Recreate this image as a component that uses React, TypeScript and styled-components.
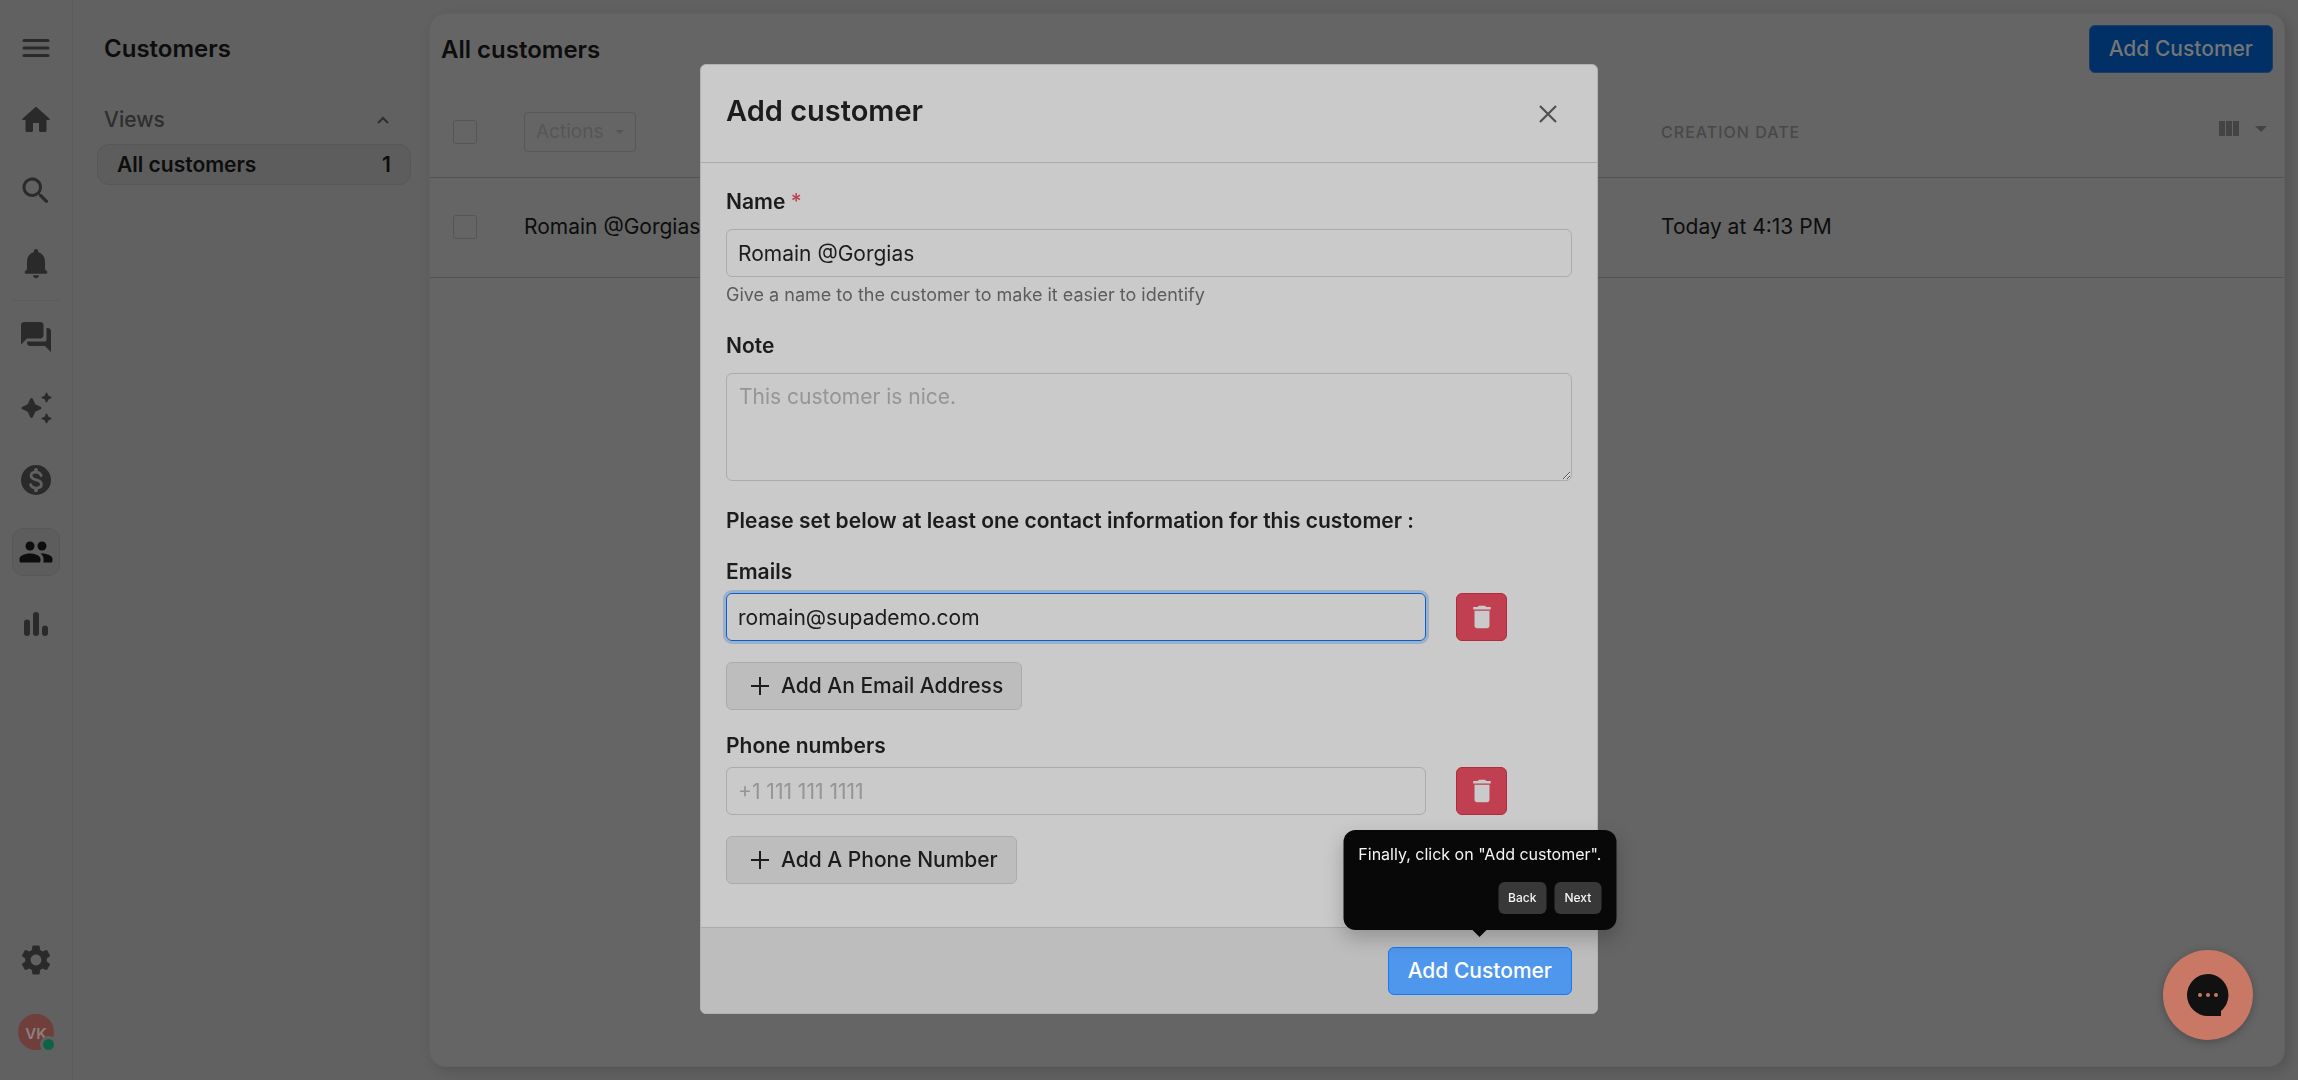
import React from "react";
import styled, { createGlobalStyle, css } from "styled-components";
import { MdDelete, MdSettings } from "react-icons/md";

const color = {
  frame: "#616161",
  card: "#656565",
  active: "#5d5d5d",
  activeBorder: "#575757",
  line: "#535353",
  faint: "#5c5c5c",
  ink: "#0d0d0d",
  inkSoft: "#2a2a2a",
  modal: "#cacaca",
  modalAlt: "#bdbdbd",
  modalLine: "#ababab",
  modalInk: "#1c1c1c",
  danger: "#c03f50",
  accent: "#0a5ecb",
  coral: "#c97865",
};

const GlobalStyle = createGlobalStyle`
  *, *::before, *::after { box-sizing: border-box; }
  body {
    margin: 0;
    background: ${color.frame};
    color: ${color.ink};
    font-family: Inter, "Liberation Sans", sans-serif;
    font-size: 21px;
    line-height: 30px;
    -webkit-font-smoothing: antialiased;
  }
  button, input, textarea { font: inherit; color: inherit; margin: 0; }
  button { cursor: pointer; }
  h1, h2, p { margin: 0; }
`;

const Shell = styled.div`
  display: grid;
  grid-template-columns: 73px 356px minmax(0, 1fr);
  min-height: 100vh;
`;

const Rail = styled.nav`
  display: flex;
  flex-direction: column;
  justify-content: space-between;
  align-items: center;
  padding: 24px 0;
  border-right: 1px solid ${color.faint};
`;

const RailGroup = styled.div`
  display: flex;
  flex-direction: column;
  gap: 24px;
`;

const RailDivider = styled.hr`
  width: 48px;
  margin: 12px 0 11px;
  border: 0;
  border-top: 1px solid ${color.faint};
`;

const RailButton = styled.button<{ $active?: boolean }>`
  display: flex;
  align-items: center;
  justify-content: center;
  width: 48px;
  height: 48px;
  padding: 0;
  border: 1px solid ${(p) => (p.$active ? color.activeBorder : "transparent")};
  border-radius: 12px;
  background: ${(p) => (p.$active ? color.active : "transparent")};
  color: ${(p) => (p.$active ? color.ink : color.inkSoft)};

  svg {
    width: 36px;
    height: 36px;
    flex: none;
    fill: currentColor;
  }
`;

const Avatar = styled.span`
  position: relative;
  display: flex;
  align-items: center;
  justify-content: center;
  width: 36px;
  height: 36px;
  padding-top: 4px;
  border-radius: 50%;
  background: #713f3b;
  color: #8c8080;
  font-size: 15px;
  font-weight: 600;
  line-height: 20px;
`;

const Presence = styled.span`
  position: absolute;
  right: -3px;
  bottom: -3px;
  width: 17px;
  height: 17px;
  border: 3px solid ${color.frame};
  border-radius: 50%;
  background: #0f6344;
`;

const Sidebar = styled.aside`
  padding: 34px 18px 24px 24px;
`;

const SidebarTitle = styled.h1`
  padding-left: 7px;
  font-size: 24px;
  font-weight: 600;
  line-height: 30px;
`;

const SectionToggle = styled.button`
  display: flex;
  align-items: center;
  justify-content: space-between;
  width: 100%;
  height: 30px;
  margin: 41px 0 9px;
  padding: 0 21px 0 7px;
  border: 0;
  background: none;
  color: #2e2e2e;
  font-weight: 500;
`;

const ViewLink = styled.a`
  display: flex;
  align-items: center;
  justify-content: space-between;
  height: 41px;
  padding: 0 19px;
  border: 1px solid ${color.activeBorder};
  border-radius: 12px;
  background: ${color.active};
  color: ${color.ink};
  font-weight: 600;
  text-decoration: none;
`;

const Card = styled.main`
  margin: 13px 13px 13px 0;
  border: 1px solid #616161;
  border-radius: 16px;
  background: ${color.card};
  box-shadow: 4px 4px 12px rgba(0, 0, 0, 0.14);
`;

const CardHeader = styled.header`
  display: flex;
  align-items: center;
  justify-content: space-between;
  padding: 11px 11px 14px;
`;

const CardTitle = styled.h2`
  padding-top: 1px;
  font-size: 24px;
  font-weight: 600;
  line-height: 30px;
`;

const PrimaryButton = styled.button<{ $highlighted?: boolean }>`
  height: 48px;
  padding: 0 19px;
  border: 1px solid ${(p) => (p.$highlighted ? "#1479f7" : "#1b3d66")};
  border-radius: 6px;
  background: ${(p) => (p.$highlighted ? "#4f97ec" : "#003066")};
  color: ${(p) => (p.$highlighted ? "#ffffff" : "#757575")};
  font-weight: 500;
`;

const Table = styled.table`
  width: 100%;
  table-layout: fixed;
  border-collapse: collapse;
`;

const cell = css`
  padding: 0;
  border-bottom: 1px solid ${color.line};
  font-weight: 400;
  text-align: left;
`;

const HeadCell = styled.th<{ $width?: string }>`
  ${cell}
  width: ${(p) => p.$width ?? "auto"};
  height: 90px;
`;

const Cell = styled.td`
  ${cell}
  height: 100px;
`;

const CheckBox = styled.input`
  display: block;
  appearance: none;
  width: 24px;
  height: 24px;
  margin: 0 0 0 23px;
  border: 1px solid #555555;
  border-radius: 3px;
`;

const ActionsButton = styled.button`
  display: flex;
  align-items: center;
  gap: 12px;
  height: 40px;
  padding: 0 11px;
  border: 1px solid #575757;
  border-radius: 4px;
  background: none;
  color: #565656;
  font-size: 19px;

  &:disabled {
    color: #565656;
    cursor: default;
  }
`;

const HeadRow = styled.div`
  display: flex;
  align-items: center;
  justify-content: space-between;
  padding-right: 17px;
`;

const HeadLabel = styled.span`
  color: #484848;
  font-size: 16px;
  font-weight: 500;
  letter-spacing: 1px;
`;

const ColumnsButton = styled.button`
  display: flex;
  align-items: center;
  gap: 16px;
  padding: 0 0 6px;
  border: 0;
  background: none;
  color: #444444;
`;

const ChatLauncher = styled.button`
  position: fixed;
  right: 45px;
  bottom: 40px;
  display: flex;
  align-items: center;
  justify-content: center;
  width: 90px;
  height: 90px;
  padding: 0;
  border: 0;
  border-radius: 50%;
  background: ${color.coral};
  box-shadow: 0 2px 8px rgba(0, 0, 0, 0.25);
`;

const Overlay = styled.div`
  position: absolute;
  inset: 0;
  padding: 64px 24px;
  pointer-events: none;
`;

const Modal = styled.section`
  max-width: 898px;
  margin: 0 auto;
  border: 1px solid #b2b2b2;
  border-radius: 6px;
  background: ${color.modal};
  color: ${color.modalInk};
  pointer-events: auto;
`;

const ModalHeader = styled.header`
  display: flex;
  align-items: flex-start;
  justify-content: space-between;
  padding: 25px 25px 30px;
  border-bottom: 1px solid ${color.modalLine};
`;

const ModalTitle = styled.h2`
  font-size: 29px;
  font-weight: 600;
  line-height: 42px;
`;

const CloseButton = styled.button`
  display: flex;
  padding: 15px 15px 0 0;
  border: 0;
  background: none;
  color: #505050;
`;

const ModalBody = styled.div`
  padding: 24px 25px 43px;
`;

const Field = styled.div`
  margin-bottom: 22px;
`;

const FieldLabel = styled.label<{ $compact?: boolean }>`
  display: block;
  margin-bottom: ${(p) => (p.$compact ? 6 : 12)}px;
  font-weight: 600;
`;

const Required = styled.span`
  color: ${color.danger};
  font-weight: 500;
`;

const control = css`
  display: block;
  width: 100%;
  border: 1px solid ${color.modalLine};
  border-radius: 6px;
  outline: none;
  background: transparent;

  &::placeholder {
    color: #959595;
    opacity: 1;
  }
`;

const TextInput = styled.input<{ $focused?: boolean }>`
  ${control}
  height: 48px;
  padding: 0 11px;
  ${(p) =>
    p.$focused &&
    css`
      border-color: ${color.accent};
      box-shadow: 0 0 0 3px rgba(15, 98, 203, 0.25);
    `}
`;

const TextArea = styled.textarea`
  ${control}
  height: 108px;
  padding: 8px 12px;
  resize: vertical;
`;

const Help = styled.p`
  margin-top: 4px;
  color: #5c5c5c;
  font-size: 18px;
  line-height: 28px;
`;

const Lead = styled.p`
  margin-top: 25px;
  font-weight: 600;
`;

const ContactSection = styled.div`
  margin-top: 21px;
`;

const ContactRow = styled.div`
  display: grid;
  grid-template-columns: 1fr 51px;
  gap: 30px;
  margin-bottom: 21px;
  padding-right: 65px;
`;

const DeleteButton = styled.button`
  display: flex;
  align-items: center;
  justify-content: center;
  height: 48px;
  padding: 0;
  border: 1px solid #ae2c3e;
  border-radius: 6px;
  background: ${color.danger};
  color: ${color.modal};
`;

const AddButton = styled.button`
  display: flex;
  align-items: center;
  gap: 6px;
  height: 48px;
  padding: 0 18px;
  border: 1px solid ${color.modalLine};
  border-radius: 6px;
  background: ${color.modalAlt};
  font-weight: 500;
`;

const ModalFooter = styled.footer`
  display: flex;
  justify-content: flex-end;
  padding: 19px 25px 18px;
  border-top: 1px solid ${color.modalLine};
  border-radius: 0 0 5px 5px;
  background: ${color.modalAlt};
`;

const Anchor = styled.div`
  position: relative;
`;

const Tooltip = styled.div`
  position: absolute;
  bottom: calc(100% + 17px);
  left: 50%;
  display: flex;
  flex-direction: column;
  gap: 17px;
  width: max-content;
  padding: 13px 15px 16px;
  border-radius: 12px;
  background: #080808;
  box-shadow: 0 8px 20px rgba(0, 0, 0, 0.22);
  color: #f5f5f5;
  font-size: 16px;
  line-height: 22px;
  transform: translateX(-50%);

  &::after {
    content: "";
    position: absolute;
    top: 100%;
    left: 50%;
    margin-left: -7px;
    border: 7px solid transparent;
    border-bottom: 0;
    border-top-color: #080808;
  }
`;

const TooltipActions = styled.div`
  display: flex;
  justify-content: flex-end;
  gap: 8px;
`;

const TooltipButton = styled.button`
  height: 32px;
  padding: 0 10px;
  border: 0;
  border-radius: 6px;
  background: #383838;
  font-size: 12px;
  font-weight: 500;
  line-height: 16px;
`;

const Icon = ({ children }: { children: React.ReactNode }) => (
  <svg viewBox="0 0 24 24" aria-hidden="true">
    {children}
  </svg>
);

const MenuIcon = () => (
  <Icon>
    <rect x="3" y="6" width="18" height="2" rx="1" />
    <rect x="3" y="11" width="18" height="2" rx="1" />
    <rect x="3" y="16" width="18" height="2" rx="1" />
  </Icon>
);

const HomeIcon = () => (
  <Icon>
    <path d="M10 19v-5h4v5c0 .55.45 1 1 1h3c.55 0 1-.45 1-1v-7h1.7c.46 0 .68-.57.33-.87L12.67 3.6c-.38-.34-.96-.34-1.34 0l-8.36 7.53c-.34.3-.13.87.33.87H5v7c0 .55.45 1 1 1h3c.55 0 1-.45 1-1z" />
  </Icon>
);

const SearchIcon = () => (
  <Icon>
    <path d="M15.5 13.3h-.79l-.28-.27c1.2-1.4 1.82-3.31 1.48-5.34-.47-2.78-2.79-5-5.59-5.34-4.23-.52-7.79 3.04-7.27 7.27.34 2.8 2.56 5.12 5.34 5.59 2.03.34 3.94-.28 5.34-1.48l.27.28v.79l4.25 4.25c.41.41 1.08.41 1.49 0 .41-.41.41-1.08 0-1.49L15.5 13.3zm-6 0C7.01 13.3 5 11.29 5 8.8S7.01 4.3 9.5 4.3 14 6.31 14 8.8 11.99 13.3 9.5 13.3z" />
  </Icon>
);

const BellIcon = () => (
  <Icon>
    <path d="M12 21.5c1.1 0 2-.9 2-2h-4c0 1.1.89 2 2 2zm6-6v-5c0-3.07-1.64-5.64-4.5-6.32V3.5c0-.83-.67-1.5-1.5-1.5s-1.5.67-1.5 1.5v.68C7.63 4.86 6 7.42 6 10.5v5l-1.29 1.29c-.63.63-.19 1.71.7 1.71h13.17c.89 0 1.34-1.08.71-1.71L18 15.5z" />
  </Icon>
);

const ForumIcon = () => (
  <Icon>
    <path
      transform="translate(0 .6)"
      d="M20 6h-1v8c0 .55-.45 1-1 1H6v1c0 1.1.9 2 2 2h10l4 4V8c0-1.1-.9-2-2-2zm-3 5V4c0-1.1-.9-2-2-2H4c-1.1 0-2 .9-2 2v13l4-4h9c1.1 0 2-.9 2-2z"
    />
  </Icon>
);

const SparkleIcon = () => (
  <Icon>
    <path d="M19.46 8l.79-1.75L22 5.46c.39-.18.39-.73 0-.91l-1.75-.79L19.46 2c-.18-.39-.73-.39-.91 0l-.79 1.75-1.76.79c-.39.18-.39.73 0 .91l1.75.79.79 1.76c.18.39.74.39.92 0zM11.5 9.5L9.91 6c-.35-.78-1.47-.78-1.82 0L6.5 9.5 3 11.09c-.78.36-.78 1.47 0 1.82l3.5 1.59L8.09 18c.36.78 1.47.78 1.82 0l1.59-3.5 3.5-1.59c.78-.36.78-1.47 0-1.82L11.5 9.5zm7.04 6.5l-.79 1.75-1.75.79c-.39.18-.39.73 0 .91l1.75.79.79 1.76c.18.39.73.39.91 0l.79-1.75 1.76-.79c.39-.18.39-.73 0-.91l-1.75-.79-.79-1.76c-.18-.39-.74-.39-.92 0z" />
  </Icon>
);

const MoneyIcon = () => (
  <Icon>
    <circle cx="12" cy="12" r="10" />
    <g fill="none" stroke={color.frame} strokeLinecap="round">
      <path
        strokeWidth="1.9"
        d="M15.4 9.1C15 7.4 13.8 6.7 12 6.7c-1.9 0-3.3.9-3.3 2.4 0 1.7 1.6 2.3 3.5 2.8 2.2.5 3.4 1.3 3.4 3 0 1.6-1.5 2.5-3.5 2.5-1.9 0-3.2-.8-3.7-2.3"
      />
      <path strokeWidth="2.6" d="M12 5.3v.8M12 18v.8" />
    </g>
  </Icon>
);

const PeopleIcon = () => (
  <Icon>
    <circle cx="8" cy="8" r="3" />
    <circle cx="16" cy="8" r="3" />
    <path d="M8 13c-2.33 0-7 1.17-7 3.5V18c0 .55.45 1 1 1h12c.55 0 1-.45 1-1v-1.5c0-2.33-4.67-3.5-7-3.5zm8 0c-.29 0-.62.02-.97.05.02.01.03.03.04.04 1.14.83 1.93 1.94 1.93 3.41V18c0 .35-.07.69-.18 1H22c.55 0 1-.45 1-1v-1.5c0-2.33-4.67-3.5-7-3.5z" />
  </Icon>
);

const ChartIcon = () => (
  <Icon>
    <rect x="4" y="9" width="4" height="11" rx="2" />
    <rect x="10" y="4" width="4" height="16" rx="2" />
    <rect x="16" y="13" width="4" height="7" rx="2" />
  </Icon>
);

const Caret = ({ width, height }: { width: number; height: number }) => (
  <svg width={width} height={height} viewBox="0 0 10 5" preserveAspectRatio="none" aria-hidden="true">
    <path d="M0 0h10L5 5z" fill="currentColor" />
  </svg>
);

const PlusIcon = () => (
  <svg width="30" height="30" viewBox="0 0 30 30" aria-hidden="true">
    <path d="M15 6v18M6 15h18" stroke="currentColor" strokeWidth="2" />
  </svg>
);

type Contact = {
  id: string;
  label: string;
  type: string;
  value?: string;
  placeholder?: string;
  focused?: boolean;
  addLabel: string;
};

const contacts: Contact[] = [
  {
    id: "email",
    label: "Emails",
    type: "email",
    value: "romain@supademo.com",
    focused: true,
    addLabel: "Add An Email Address",
  },
  {
    id: "phone",
    label: "Phone numbers",
    type: "tel",
    placeholder: "+1 111 111 1111",
    addLabel: "Add A Phone Number",
  },
];

const primaryNav = [
  { label: "Menu", icon: <MenuIcon /> },
  { label: "Home", icon: <HomeIcon /> },
  { label: "Search", icon: <SearchIcon /> },
  { label: "Notifications", icon: <BellIcon /> },
];

const productNav = [
  { label: "Tickets", icon: <ForumIcon /> },
  { label: "Automate", icon: <SparkleIcon /> },
  { label: "Convert", icon: <MoneyIcon /> },
  { label: "Customers", icon: <PeopleIcon />, active: true },
  { label: "Statistics", icon: <ChartIcon /> },
];

function AddCustomerModal() {
  return (
    <Overlay>
      <Modal role="dialog" aria-labelledby="modal-title">
        <ModalHeader>
          <ModalTitle id="modal-title">Add customer</ModalTitle>
          <CloseButton type="button" aria-label="Close">
            <svg width="18" height="18" viewBox="0 0 18 18" aria-hidden="true">
              <path d="M1 1l16 16M17 1L1 17" stroke="currentColor" strokeWidth="2.2" />
            </svg>
          </CloseButton>
        </ModalHeader>
        <ModalBody>
          <Field>
            <FieldLabel htmlFor="name">
              Name <Required>*</Required>
            </FieldLabel>
            <TextInput id="name" defaultValue="Romain @Gorgias" />
            <Help>Give a name to the customer to make it easier to identify</Help>
          </Field>
          <Field>
            <FieldLabel htmlFor="note">Note</FieldLabel>
            <TextArea id="note" placeholder="This customer is nice." />
          </Field>
          <Lead>Please set below at least one contact information for this customer :</Lead>
          {contacts.map((c) => (
            <ContactSection key={c.id}>
              <FieldLabel htmlFor={c.id} $compact>
                {c.label}
              </FieldLabel>
              <ContactRow>
                <TextInput
                  id={c.id}
                  type={c.type}
                  defaultValue={c.value}
                  placeholder={c.placeholder}
                  $focused={c.focused}
                />
                <DeleteButton type="button" aria-label="Delete">
                  <MdDelete size={30} />
                </DeleteButton>
              </ContactRow>
              <AddButton type="button">
                <PlusIcon />
                {c.addLabel}
              </AddButton>
            </ContactSection>
          ))}
        </ModalBody>
        <ModalFooter>
          <Anchor>
            <PrimaryButton type="button" $highlighted>
              Add Customer
            </PrimaryButton>
            <Tooltip role="tooltip">
              <p>Finally, click on "Add customer".</p>
              <TooltipActions>
                <TooltipButton type="button">Back</TooltipButton>
                <TooltipButton type="button">Next</TooltipButton>
              </TooltipActions>
            </Tooltip>
          </Anchor>
        </ModalFooter>
      </Modal>
    </Overlay>
  );
}

export default function App() {
  return (
    <>
      <GlobalStyle />
      <Shell>
        <Rail>
          <div>
            <RailGroup>
              {primaryNav.map((n) => (
                <RailButton key={n.label} type="button" aria-label={n.label}>
                  {n.icon}
                </RailButton>
              ))}
            </RailGroup>
            <RailDivider />
            <RailGroup>
              {productNav.map((n) => (
                <RailButton key={n.label} type="button" aria-label={n.label} $active={n.active}>
                  {n.icon}
                </RailButton>
              ))}
            </RailGroup>
          </div>
          <RailGroup>
            <RailButton type="button" aria-label="Settings">
              <MdSettings />
            </RailButton>
            <RailButton type="button" aria-label="Account">
              <Avatar>
                VK
                <Presence />
              </Avatar>
            </RailButton>
          </RailGroup>
        </Rail>

        <Sidebar>
          <SidebarTitle>Customers</SidebarTitle>
          <SectionToggle type="button" aria-expanded="true">
            Views
            <svg width="14" height="8" viewBox="0 0 14 8" aria-hidden="true">
              <path d="M2 7l5-5 5 5" fill="none" stroke="currentColor" strokeWidth="2" />
            </svg>
          </SectionToggle>
          <ViewLink href="#all-customers">
            <span>All customers</span>
            <span>1</span>
          </ViewLink>
        </Sidebar>

        <Card>
          <CardHeader>
            <CardTitle>All customers</CardTitle>
            <PrimaryButton type="button">Add Customer</PrimaryButton>
          </CardHeader>
          <Table>
            <thead>
              <tr>
                <HeadCell $width="94px">
                  <CheckBox type="checkbox" aria-label="Select all customers" />
                </HeadCell>
                <HeadCell>
                  <ActionsButton type="button" disabled>
                    Actions
                    <Caret width={9} height={4} />
                  </ActionsButton>
                </HeadCell>
                <HeadCell $width="33.6%">
                  <HeadRow>
                    <HeadLabel>CREATION DATE</HeadLabel>
                    <ColumnsButton type="button" aria-label="Edit columns">
                      <svg width="20" height="15" viewBox="0 0 20 15" aria-hidden="true">
                        <path d="M0 0h6v15H0zM7 0h6v15H7zM14 0h6v15h-6z" fill="currentColor" />
                      </svg>
                      <Caret width={12} height={6} />
                    </ColumnsButton>
                  </HeadRow>
                </HeadCell>
              </tr>
            </thead>
            <tbody>
              <tr>
                <Cell>
                  <CheckBox type="checkbox" aria-label="Select Romain @Gorgias" />
                </Cell>
                <Cell>Romain @Gorgias</Cell>
                <Cell>Today at 4:13 PM</Cell>
              </tr>
            </tbody>
          </Table>
        </Card>
      </Shell>

      <ChatLauncher type="button" aria-label="Open chat">
        <svg width="44" height="44" viewBox="0 0 44 44" aria-hidden="true">
          <path d="M22 1a21 21 0 1 0 0 42h13v-5A21 21 0 0 0 22 1z" fill="#111111" />
          <g fill={color.coral}>
            <circle cx="14" cy="22" r="2" />
            <circle cx="22" cy="22" r="2" />
            <circle cx="30" cy="22" r="2" />
          </g>
        </svg>
      </ChatLauncher>
      <AddCustomerModal />
    </>
  );
}
